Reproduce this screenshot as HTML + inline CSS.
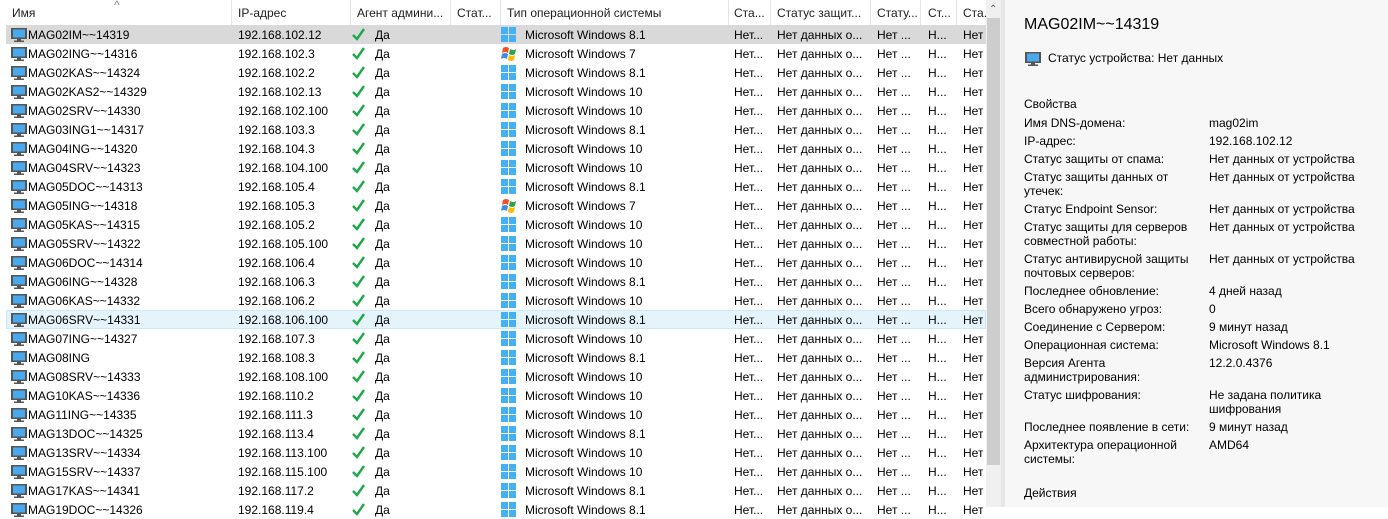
<!DOCTYPE html>
<html><head><meta charset="utf-8"><style>
*{margin:0;padding:0;box-sizing:border-box}
body{width:1388px;height:507px;overflow:hidden;background:#fff;font-family:"Liberation Sans",sans-serif;font-size:12px;color:#000;position:relative}
.hd{position:absolute;top:0;left:0;width:986px;height:25px;background:#fff}
.hd span{position:absolute;top:6px;color:#1e1e1e;white-space:nowrap}
.hd i{position:absolute;top:0;width:1px;height:25px;background:#e5e5e5}
.r{position:absolute;left:0;width:986px;height:19px}
.r span{position:absolute;top:3px;white-space:nowrap;overflow:hidden}
.sel::before{content:"";position:absolute;left:6px;right:0;top:0;bottom:0;background:#d9d9d9}
.hov::before{content:"";position:absolute;left:6px;right:0;top:0;bottom:0;background:#e5f3fb;border:1px solid #cce8ff}
.c1{left:28px}.c2{left:238px}.c3{left:375px}.c5{left:525px}.c6{left:734px}.c7{left:777px}.c8{left:877px}.c9{left:928px}.c10{left:963px}
.mon{position:absolute;left:11px;top:3px}
.chk{position:absolute;left:351px;top:2px}
.os{position:absolute;left:501px;top:2px}
.sb{position:absolute;left:986px;top:0;width:15px;height:507px;background:#f0f0f0}
.th{position:absolute;left:987px;top:18px;width:13px;height:447px;background:#cdcdcd}
.sp{position:absolute;left:1001px;top:0;width:4px;height:507px;background:#e6e6e6}
.rp{position:absolute;left:1005px;top:0;width:383px;height:507px;background:#f7f7f7}
.rp div{position:absolute;white-space:nowrap;line-height:14px}
.l{left:19px}.v{left:204px}
</style></head><body>
<svg width="0" height="0" style="position:absolute"><defs>
<g id="m"><rect x="0" y="0" width="16" height="11" fill="#555"/><rect x="2" y="1.5" width="12" height="8" fill="#4aa8ec"/><rect x="6" y="11" width="4" height="1.5" fill="#555"/><rect x="3" y="12.5" width="10" height="1.5" fill="#555"/></g>
<g id="w8" fill="#44b0f5"><rect x="0" y="0" width="7" height="7"/><rect x="8" y="0" width="7" height="7"/><rect x="0" y="8" width="7" height="7"/><rect x="8" y="8" width="7" height="7"/></g>
<g id="w7"><path d="M2 2 Q5 0 8 2 L7 7 Q4 5 1 7Z" fill="#f25022"/><path d="M9 3 Q12 5 15 3 L14 8 Q11 10 8 8Z" fill="#2da44a"/><path d="M1 8 Q4 6 7 8 L6 13 Q3 11 0 13Z" fill="#3a8ee6"/><path d="M8 9 Q11 11 14 9 L13 14 Q10 16 7 14Z" fill="#fbbc05"/></g>
<g id="c"><path d="M2 8 L6 12 L13 2" stroke="#1ea84a" stroke-width="2.4" fill="none"/></g>
</defs></svg>
<div class="hd">
<span style="left:12px">Имя</span><span style="left:114px;top:-2px;color:#888">^</span><i style="left:231px"></i>
<span style="left:238px">IP-адрес</span><i style="left:350px"></i>
<span style="left:357px">Агент админи...</span><i style="left:450px"></i>
<span style="left:457px">Стат...</span><i style="left:500px"></i>
<span style="left:507px">Тип операционной системы</span><i style="left:728px"></i>
<span style="left:734px">Ста...</span><i style="left:770px"></i>
<span style="left:777px">Статус защит...</span><i style="left:870px"></i>
<span style="left:877px">Стату...</span><i style="left:920px"></i>
<span style="left:928px">Ст...</span><i style="left:956px"></i>
<span style="left:963px">Ста.</span>
</div>

<div class="r sel" style="top:25px"><svg class="mon" width="16" height="14"><use href="#m"/></svg><span class="c1">MAG02IM~~14319</span><span class="c2">192.168.102.12</span><svg class="chk" width="16" height="14"><use href="#c"/></svg><span class="c3">Да</span><svg class="os" width="16" height="16"><use href="#w8"/></svg><span class="c5">Microsoft Windows 8.1</span><span class="c6">Нет...</span><span class="c7">Нет данных о...</span><span class="c8">Нет ...</span><span class="c9">Н...</span><span class="c10">Нет</span></div>
<div class="r" style="top:44px"><svg class="mon" width="16" height="14"><use href="#m"/></svg><span class="c1">MAG02ING~~14316</span><span class="c2">192.168.102.3</span><svg class="chk" width="16" height="14"><use href="#c"/></svg><span class="c3">Да</span><svg class="os" width="16" height="16"><use href="#w7"/></svg><span class="c5">Microsoft Windows 7</span><span class="c6">Нет...</span><span class="c7">Нет данных о...</span><span class="c8">Нет ...</span><span class="c9">Н...</span><span class="c10">Нет</span></div>
<div class="r" style="top:63px"><svg class="mon" width="16" height="14"><use href="#m"/></svg><span class="c1">MAG02KAS~~14324</span><span class="c2">192.168.102.2</span><svg class="chk" width="16" height="14"><use href="#c"/></svg><span class="c3">Да</span><svg class="os" width="16" height="16"><use href="#w8"/></svg><span class="c5">Microsoft Windows 8.1</span><span class="c6">Нет...</span><span class="c7">Нет данных о...</span><span class="c8">Нет ...</span><span class="c9">Н...</span><span class="c10">Нет</span></div>
<div class="r" style="top:82px"><svg class="mon" width="16" height="14"><use href="#m"/></svg><span class="c1">MAG02KAS2~~14329</span><span class="c2">192.168.102.13</span><svg class="chk" width="16" height="14"><use href="#c"/></svg><span class="c3">Да</span><svg class="os" width="16" height="16"><use href="#w8"/></svg><span class="c5">Microsoft Windows 10</span><span class="c6">Нет...</span><span class="c7">Нет данных о...</span><span class="c8">Нет ...</span><span class="c9">Н...</span><span class="c10">Нет</span></div>
<div class="r" style="top:101px"><svg class="mon" width="16" height="14"><use href="#m"/></svg><span class="c1">MAG02SRV~~14330</span><span class="c2">192.168.102.100</span><svg class="chk" width="16" height="14"><use href="#c"/></svg><span class="c3">Да</span><svg class="os" width="16" height="16"><use href="#w8"/></svg><span class="c5">Microsoft Windows 10</span><span class="c6">Нет...</span><span class="c7">Нет данных о...</span><span class="c8">Нет ...</span><span class="c9">Н...</span><span class="c10">Нет</span></div>
<div class="r" style="top:120px"><svg class="mon" width="16" height="14"><use href="#m"/></svg><span class="c1">MAG03ING1~~14317</span><span class="c2">192.168.103.3</span><svg class="chk" width="16" height="14"><use href="#c"/></svg><span class="c3">Да</span><svg class="os" width="16" height="16"><use href="#w8"/></svg><span class="c5">Microsoft Windows 8.1</span><span class="c6">Нет...</span><span class="c7">Нет данных о...</span><span class="c8">Нет ...</span><span class="c9">Н...</span><span class="c10">Нет</span></div>
<div class="r" style="top:139px"><svg class="mon" width="16" height="14"><use href="#m"/></svg><span class="c1">MAG04ING~~14320</span><span class="c2">192.168.104.3</span><svg class="chk" width="16" height="14"><use href="#c"/></svg><span class="c3">Да</span><svg class="os" width="16" height="16"><use href="#w8"/></svg><span class="c5">Microsoft Windows 10</span><span class="c6">Нет...</span><span class="c7">Нет данных о...</span><span class="c8">Нет ...</span><span class="c9">Н...</span><span class="c10">Нет</span></div>
<div class="r" style="top:158px"><svg class="mon" width="16" height="14"><use href="#m"/></svg><span class="c1">MAG04SRV~~14323</span><span class="c2">192.168.104.100</span><svg class="chk" width="16" height="14"><use href="#c"/></svg><span class="c3">Да</span><svg class="os" width="16" height="16"><use href="#w8"/></svg><span class="c5">Microsoft Windows 10</span><span class="c6">Нет...</span><span class="c7">Нет данных о...</span><span class="c8">Нет ...</span><span class="c9">Н...</span><span class="c10">Нет</span></div>
<div class="r" style="top:177px"><svg class="mon" width="16" height="14"><use href="#m"/></svg><span class="c1">MAG05DOC~~14313</span><span class="c2">192.168.105.4</span><svg class="chk" width="16" height="14"><use href="#c"/></svg><span class="c3">Да</span><svg class="os" width="16" height="16"><use href="#w8"/></svg><span class="c5">Microsoft Windows 8.1</span><span class="c6">Нет...</span><span class="c7">Нет данных о...</span><span class="c8">Нет ...</span><span class="c9">Н...</span><span class="c10">Нет</span></div>
<div class="r" style="top:196px"><svg class="mon" width="16" height="14"><use href="#m"/></svg><span class="c1">MAG05ING~~14318</span><span class="c2">192.168.105.3</span><svg class="chk" width="16" height="14"><use href="#c"/></svg><span class="c3">Да</span><svg class="os" width="16" height="16"><use href="#w7"/></svg><span class="c5">Microsoft Windows 7</span><span class="c6">Нет...</span><span class="c7">Нет данных о...</span><span class="c8">Нет ...</span><span class="c9">Н...</span><span class="c10">Нет</span></div>
<div class="r" style="top:215px"><svg class="mon" width="16" height="14"><use href="#m"/></svg><span class="c1">MAG05KAS~~14315</span><span class="c2">192.168.105.2</span><svg class="chk" width="16" height="14"><use href="#c"/></svg><span class="c3">Да</span><svg class="os" width="16" height="16"><use href="#w8"/></svg><span class="c5">Microsoft Windows 10</span><span class="c6">Нет...</span><span class="c7">Нет данных о...</span><span class="c8">Нет ...</span><span class="c9">Н...</span><span class="c10">Нет</span></div>
<div class="r" style="top:234px"><svg class="mon" width="16" height="14"><use href="#m"/></svg><span class="c1">MAG05SRV~~14322</span><span class="c2">192.168.105.100</span><svg class="chk" width="16" height="14"><use href="#c"/></svg><span class="c3">Да</span><svg class="os" width="16" height="16"><use href="#w8"/></svg><span class="c5">Microsoft Windows 10</span><span class="c6">Нет...</span><span class="c7">Нет данных о...</span><span class="c8">Нет ...</span><span class="c9">Н...</span><span class="c10">Нет</span></div>
<div class="r" style="top:253px"><svg class="mon" width="16" height="14"><use href="#m"/></svg><span class="c1">MAG06DOC~~14314</span><span class="c2">192.168.106.4</span><svg class="chk" width="16" height="14"><use href="#c"/></svg><span class="c3">Да</span><svg class="os" width="16" height="16"><use href="#w8"/></svg><span class="c5">Microsoft Windows 10</span><span class="c6">Нет...</span><span class="c7">Нет данных о...</span><span class="c8">Нет ...</span><span class="c9">Н...</span><span class="c10">Нет</span></div>
<div class="r" style="top:272px"><svg class="mon" width="16" height="14"><use href="#m"/></svg><span class="c1">MAG06ING~~14328</span><span class="c2">192.168.106.3</span><svg class="chk" width="16" height="14"><use href="#c"/></svg><span class="c3">Да</span><svg class="os" width="16" height="16"><use href="#w8"/></svg><span class="c5">Microsoft Windows 8.1</span><span class="c6">Нет...</span><span class="c7">Нет данных о...</span><span class="c8">Нет ...</span><span class="c9">Н...</span><span class="c10">Нет</span></div>
<div class="r" style="top:291px"><svg class="mon" width="16" height="14"><use href="#m"/></svg><span class="c1">MAG06KAS~~14332</span><span class="c2">192.168.106.2</span><svg class="chk" width="16" height="14"><use href="#c"/></svg><span class="c3">Да</span><svg class="os" width="16" height="16"><use href="#w8"/></svg><span class="c5">Microsoft Windows 10</span><span class="c6">Нет...</span><span class="c7">Нет данных о...</span><span class="c8">Нет ...</span><span class="c9">Н...</span><span class="c10">Нет</span></div>
<div class="r hov" style="top:310px"><svg class="mon" width="16" height="14"><use href="#m"/></svg><span class="c1">MAG06SRV~~14331</span><span class="c2">192.168.106.100</span><svg class="chk" width="16" height="14"><use href="#c"/></svg><span class="c3">Да</span><svg class="os" width="16" height="16"><use href="#w8"/></svg><span class="c5">Microsoft Windows 8.1</span><span class="c6">Нет...</span><span class="c7">Нет данных о...</span><span class="c8">Нет ...</span><span class="c9">Н...</span><span class="c10">Нет</span></div>
<div class="r" style="top:329px"><svg class="mon" width="16" height="14"><use href="#m"/></svg><span class="c1">MAG07ING~~14327</span><span class="c2">192.168.107.3</span><svg class="chk" width="16" height="14"><use href="#c"/></svg><span class="c3">Да</span><svg class="os" width="16" height="16"><use href="#w8"/></svg><span class="c5">Microsoft Windows 10</span><span class="c6">Нет...</span><span class="c7">Нет данных о...</span><span class="c8">Нет ...</span><span class="c9">Н...</span><span class="c10">Нет</span></div>
<div class="r" style="top:348px"><svg class="mon" width="16" height="14"><use href="#m"/></svg><span class="c1">MAG08ING</span><span class="c2">192.168.108.3</span><svg class="chk" width="16" height="14"><use href="#c"/></svg><span class="c3">Да</span><svg class="os" width="16" height="16"><use href="#w8"/></svg><span class="c5">Microsoft Windows 8.1</span><span class="c6">Нет...</span><span class="c7">Нет данных о...</span><span class="c8">Нет ...</span><span class="c9">Н...</span><span class="c10">Нет</span></div>
<div class="r" style="top:367px"><svg class="mon" width="16" height="14"><use href="#m"/></svg><span class="c1">MAG08SRV~~14333</span><span class="c2">192.168.108.100</span><svg class="chk" width="16" height="14"><use href="#c"/></svg><span class="c3">Да</span><svg class="os" width="16" height="16"><use href="#w8"/></svg><span class="c5">Microsoft Windows 10</span><span class="c6">Нет...</span><span class="c7">Нет данных о...</span><span class="c8">Нет ...</span><span class="c9">Н...</span><span class="c10">Нет</span></div>
<div class="r" style="top:386px"><svg class="mon" width="16" height="14"><use href="#m"/></svg><span class="c1">MAG10KAS~~14336</span><span class="c2">192.168.110.2</span><svg class="chk" width="16" height="14"><use href="#c"/></svg><span class="c3">Да</span><svg class="os" width="16" height="16"><use href="#w8"/></svg><span class="c5">Microsoft Windows 10</span><span class="c6">Нет...</span><span class="c7">Нет данных о...</span><span class="c8">Нет ...</span><span class="c9">Н...</span><span class="c10">Нет</span></div>
<div class="r" style="top:405px"><svg class="mon" width="16" height="14"><use href="#m"/></svg><span class="c1">MAG11ING~~14335</span><span class="c2">192.168.111.3</span><svg class="chk" width="16" height="14"><use href="#c"/></svg><span class="c3">Да</span><svg class="os" width="16" height="16"><use href="#w8"/></svg><span class="c5">Microsoft Windows 10</span><span class="c6">Нет...</span><span class="c7">Нет данных о...</span><span class="c8">Нет ...</span><span class="c9">Н...</span><span class="c10">Нет</span></div>
<div class="r" style="top:424px"><svg class="mon" width="16" height="14"><use href="#m"/></svg><span class="c1">MAG13DOC~~14325</span><span class="c2">192.168.113.4</span><svg class="chk" width="16" height="14"><use href="#c"/></svg><span class="c3">Да</span><svg class="os" width="16" height="16"><use href="#w8"/></svg><span class="c5">Microsoft Windows 8.1</span><span class="c6">Нет...</span><span class="c7">Нет данных о...</span><span class="c8">Нет ...</span><span class="c9">Н...</span><span class="c10">Нет</span></div>
<div class="r" style="top:443px"><svg class="mon" width="16" height="14"><use href="#m"/></svg><span class="c1">MAG13SRV~~14334</span><span class="c2">192.168.113.100</span><svg class="chk" width="16" height="14"><use href="#c"/></svg><span class="c3">Да</span><svg class="os" width="16" height="16"><use href="#w8"/></svg><span class="c5">Microsoft Windows 10</span><span class="c6">Нет...</span><span class="c7">Нет данных о...</span><span class="c8">Нет ...</span><span class="c9">Н...</span><span class="c10">Нет</span></div>
<div class="r" style="top:462px"><svg class="mon" width="16" height="14"><use href="#m"/></svg><span class="c1">MAG15SRV~~14337</span><span class="c2">192.168.115.100</span><svg class="chk" width="16" height="14"><use href="#c"/></svg><span class="c3">Да</span><svg class="os" width="16" height="16"><use href="#w8"/></svg><span class="c5">Microsoft Windows 10</span><span class="c6">Нет...</span><span class="c7">Нет данных о...</span><span class="c8">Нет ...</span><span class="c9">Н...</span><span class="c10">Нет</span></div>
<div class="r" style="top:481px"><svg class="mon" width="16" height="14"><use href="#m"/></svg><span class="c1">MAG17KAS~~14341</span><span class="c2">192.168.117.2</span><svg class="chk" width="16" height="14"><use href="#c"/></svg><span class="c3">Да</span><svg class="os" width="16" height="16"><use href="#w8"/></svg><span class="c5">Microsoft Windows 8.1</span><span class="c6">Нет...</span><span class="c7">Нет данных о...</span><span class="c8">Нет ...</span><span class="c9">Н...</span><span class="c10">Нет</span></div>
<div class="r" style="top:500px"><svg class="mon" width="16" height="14"><use href="#m"/></svg><span class="c1">MAG19DOC~~14326</span><span class="c2">192.168.119.4</span><svg class="chk" width="16" height="14"><use href="#c"/></svg><span class="c3">Да</span><svg class="os" width="16" height="16"><use href="#w8"/></svg><span class="c5">Microsoft Windows 8.1</span><span class="c6">Нет...</span><span class="c7">Нет данных о...</span><span class="c8">Нет ...</span><span class="c9">Н...</span><span class="c10">Нет</span></div>

<div class="sb"><div style="position:absolute;left:3px;top:4px;color:#606060;font-size:10px">&#8963;</div></div>
<div class="th"></div>
<div class="sp"></div>
<div class="rp">
<div style="left:19px;top:16px;font-size:16px;line-height:18px">MAG02IM~~14319</div>
<svg style="position:absolute;left:20px;top:52px" width="16" height="14"><use href="#m"/></svg>
<div style="left:43px;top:51px">Статус устройства: Нет данных</div>
<div class="l" style="top:97px">Свойства</div>
<div class="l" style="top:116px">Имя DNS-домена:</div><div class="v" style="top:116px">mag02im</div>
<div class="l" style="top:134px">IP-адрес:</div><div class="v" style="top:134px">192.168.102.12</div>
<div class="l" style="top:152px">Статус защиты от спама:</div><div class="v" style="top:152px">Нет данных от устройства</div>
<div class="l" style="top:170px">Статус защиты данных от<br>утечек:</div><div class="v" style="top:170px">Нет данных от устройства</div>
<div class="l" style="top:202px">Статус Endpoint Sensor:</div><div class="v" style="top:202px">Нет данных от устройства</div>
<div class="l" style="top:220px">Статус защиты для серверов<br>совместной работы:</div><div class="v" style="top:220px">Нет данных от устройства</div>
<div class="l" style="top:252px">Статус антивирусной защиты<br>почтовых серверов:</div><div class="v" style="top:252px">Нет данных от устройства</div>
<div class="l" style="top:284px">Последнее обновление:</div><div class="v" style="top:284px">4 дней назад</div>
<div class="l" style="top:302px">Всего обнаружено угроз:</div><div class="v" style="top:302px">0</div>
<div class="l" style="top:320px">Соединение с Сервером:</div><div class="v" style="top:320px">9 минут назад</div>
<div class="l" style="top:338px">Операционная система:</div><div class="v" style="top:338px">Microsoft Windows 8.1</div>
<div class="l" style="top:356px">Версия Агента<br>администрирования:</div><div class="v" style="top:356px">12.2.0.4376</div>
<div class="l" style="top:388px">Статус шифрования:</div><div class="v" style="top:388px">Не задана политика<br>шифрования</div>
<div class="l" style="top:420px">Последнее появление в сети:</div><div class="v" style="top:420px">9 минут назад</div>
<div class="l" style="top:438px">Архитектура операционной<br>системы:</div><div class="v" style="top:438px">AMD64</div>
<div class="l" style="top:486px">Действия</div>
</div>
</body></html>
